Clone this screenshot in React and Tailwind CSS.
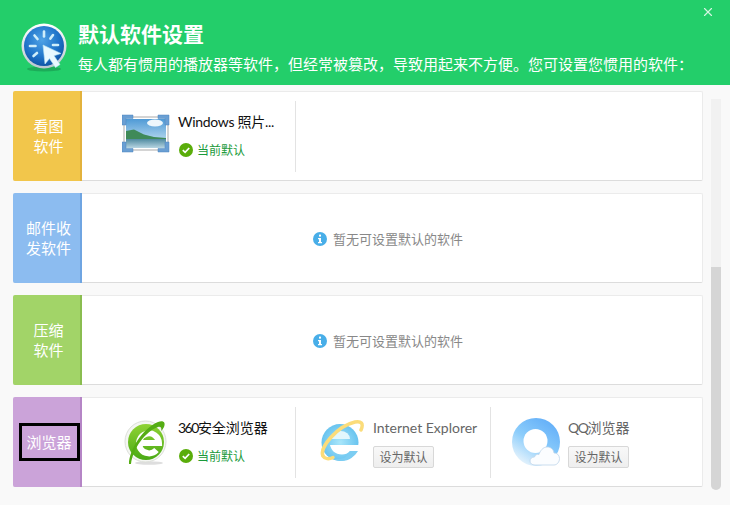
import { X } from "lucide-react";

const FONT = "font-['Noto_Sans_CJK_SC','Noto_Sans',sans-serif]";

const CursorLogo = () => (
  <svg width="48" height="50" viewBox="0 0 48 50" className="shrink-0">
    <defs>
      <radialGradient id="cursorBlue" cx="45%" cy="35%" r="70%">
        <stop offset="0%" stopColor="#4fa3e6" />
        <stop offset="60%" stopColor="#1f74c9" />
        <stop offset="100%" stopColor="#0c4f9f" />
      </radialGradient>
      <linearGradient id="cursorRing" x1="0" y1="0" x2="0" y2="1">
        <stop offset="0%" stopColor="#ffffff" />
        <stop offset="100%" stopColor="#b9c6cf" />
      </linearGradient>
    </defs>
    <ellipse cx="23" cy="46" rx="17" ry="2.5" fill="#17904a" opacity="0.55" />
    <circle cx="23" cy="23" r="22.5" fill="url(#cursorRing)" />
    <circle cx="23" cy="23" r="20" fill="url(#cursorBlue)" />
    <g stroke="#cfeefa" strokeWidth="2.6" strokeLinecap="round">
      <path d="M23 8.5v5" />
      <path d="M32 12l-2.600 3.600" />
      <path d="M37 22h-5" />
      <path d="M13.500 12.500l3 3.500" />
      <path d="M9 23h5.500" />
      <path d="M12.500 33l3.500-3" />
    </g>
    <path
      d="M22 22l2 19 4.500-5.500 6 9 4.500-3-6-8.800 7-2.200z"
      fill="#e8f9ff"
      stroke="#b7e3f2"
      strokeWidth="0.6"
    />
  </svg>
);

const PhotoIcon = () => (
  <svg width="48" height="48" viewBox="0 0 48 48" className="shrink-0">
    <defs>
      <linearGradient id="photoSky" x1="0" y1="0" x2="0" y2="1">
        <stop offset="0%" stopColor="#4f9ad6" />
        <stop offset="100%" stopColor="#d9eef6" />
      </linearGradient>
      <linearGradient id="photoLake" x1="0" y1="0" x2="0" y2="1">
        <stop offset="0%" stopColor="#4f8aa0" />
        <stop offset="100%" stopColor="#b7d5e2" />
      </linearGradient>
    </defs>
    <rect x="2" y="5" width="44" height="33" fill="#fff" stroke="#a9a9a9" />
    <rect x="4" y="7" width="40" height="29" fill="url(#photoSky)" />
    <ellipse cx="33" cy="11" rx="8" ry="3.500" fill="#eef7fc" />
    <path d="M4 19l8-1.500 10 5 10 2.500 12 1v4H4z" fill="#3f8a58" />
    <rect x="4" y="27" width="40" height="9" fill="url(#photoLake)" />
    <g fill="#6a9fd3" stroke="#4c86bf" strokeWidth="0.5">
      <path d="M0 3h11v3.500H4V13H0z" />
      <path d="M47 3H36v3.500h7V13h4z" />
      <path d="M0 40h11v-3.500H4V30H0z" />
      <path d="M47 40H36v-3.500h7V30h4z" />
    </g>
  </svg>
);

const Logo360 = () => (
  <svg width="48" height="48" viewBox="0 0 48 48" className="shrink-0">
    <defs>
      <linearGradient id="green360" x1="0" y1="0" x2="0" y2="1">
        <stop offset="0%" stopColor="#8fd334" />
        <stop offset="100%" stopColor="#4aa916" />
      </linearGradient>
    </defs>
    <ellipse cx="27" cy="45" rx="14" ry="1.800" fill="#dedede" />
    <circle cx="23.500" cy="23.500" r="20.500" fill="#f4f6f2" stroke="#dcdfd9" />
    <circle cx="24" cy="24" r="18" fill="url(#green360)" />
    <path
      d="M17 25H37A10 10 0 1 0 34.500 32"
      fill="none"
      stroke="#fff"
      strokeWidth="6"
    />
    <path
      d="M7 46C7 32 21 10 36 4c5-2 8 0 6 5-1 2-2 3-3 4 1-3 0-5-3-4C24 13 11 30 9 46z"
      fill="#55ad14"
    />
  </svg>
);

const IeLogo = () => (
  <svg width="48" height="48" viewBox="0 0 48 48" className="shrink-0">
    <defs>
      <radialGradient id="ieBlue" cx="50%" cy="50%" r="55%">
        <stop offset="0%" stopColor="#a9e6fa" />
        <stop offset="100%" stopColor="#62c0ee" />
      </radialGradient>
    </defs>
    <circle cx="23" cy="24.500" r="18.500" fill="url(#ieBlue)" />
    <path d="M14 21a9.500 8 0 0 1 19 0z" fill="#e2f7fd" />
    <path
      d="M13 27H48V33H33C31 35.500 28 36.500 25 36.500 18 36.500 14 32 13 27z"
      fill="#fff"
    />
    <path d="M33 33H41C38 38 32 43 25 43c-3 0-6-1-8-2 3 0 7 0 10-1 2-1 4-4 6-7z" fill="#7ccdf2" />
    <path
      d="M6 38C2 30 20 8 38 4 44 3 47 5 44 12"
      fill="none"
      stroke="#fbdc7a"
      strokeWidth="3.500"
      strokeLinecap="round"
    />
    <path d="M6 38c1.500 3 6 3.500 10 1.500" fill="none" stroke="#fbdc7a" strokeWidth="3.500" strokeLinecap="round" />
  </svg>
);

const QqLogo = () => (
  <svg width="48" height="48" viewBox="0 0 48 48" className="shrink-0">
    <defs>
      <linearGradient id="qqBlue" x1="0.9" y1="0.1" x2="0.3" y2="1">
        <stop offset="0%" stopColor="#62aef8" />
        <stop offset="55%" stopColor="#8ccdfb" />
        <stop offset="100%" stopColor="#e6f3fc" />
      </linearGradient>
    </defs>
    <circle cx="24" cy="24" r="24" fill="url(#qqBlue)" />
    <circle cx="23.500" cy="23" r="12" fill="#fff" />
    <path
      d="M23 47c-3 0-5-1.500-5-4s2-4 4.500-4c.5-2 2.500-3 4.500-2.500C28 33 31 29 35 29c4 0 6.500 2.500 7 6 3 0 5.500 2 5.500 5.500S45 47 42 47z"
      fill="#fbfdff"
      stroke="#bed4ea"
      strokeWidth="0.8"
    />
  </svg>
);

const CurrentDefault = () => (
  <div className="flex items-center gap-1 h-[22px] pb-[2px] pl-px">
    <svg width="14" height="14" viewBox="0 0 14 14" className="shrink-0">
      <circle cx="7" cy="7" r="7" fill="#5aad0a" />
      <path
        d="M3.800 7.200l2.300 2.200 4.100-4.400"
        fill="none"
        stroke="#fff"
        strokeWidth="1.700"
      />
    </svg>
    <span className="text-xs text-[#1a9a3a]">当前默认</span>
  </div>
);

const SetDefaultButton = () => (
  <button className="w-[61px] h-[22px] border border-[#d8d8d8] rounded-[2px] bg-gradient-to-b from-[#f8f8f8] to-[#eeeeee] text-xs text-[#666666]">
    设为默认
  </button>
);

const Software = ({ icon, name, current, className, nameClass }) => (
  <div className={`flex items-center h-[71px] ${className}`}>
    {icon}
    <div className="flex flex-col items-start gap-2 ml-2 mt-[2px]">
      <span className={`font-['Lato','Noto_Sans_CJK_SC',sans-serif] text-sm leading-5 whitespace-nowrap ${nameClass}`}>
        {name}
      </span>
      {current ? <CurrentDefault /> : <SetDefaultButton />}
    </div>
  </div>
);

const Empty = () => (
  <div className="flex-1 flex items-center justify-center gap-1.5 pr-2 pt-px">
    <svg width="14" height="14" viewBox="0 0 14 14" className="shrink-0">
      <circle cx="7" cy="7" r="7" fill="#48aee8" />
      <rect x="6" y="2.600" width="2" height="2" fill="#fff" />
      <path d="M5 6h3v4h1v1.300H5V10h1V7.300H5z" fill="#fff" />
    </svg>
    <span className="text-[13px] text-[#888888]">暂无可设置默认的软件</span>
  </div>
);

const Card = ({ lines, color, edge, outlined, children }) => (
  <div className="flex h-[90px] bg-white border border-[#ebebeb] border-b-[#dcdcdc] rounded-[2px]">
    <div
      className={`w-[69px] -ml-px -my-px shrink-0 flex items-center justify-center pl-1 border-r-2 rounded-l-[2px] ${color} ${edge}`}
    >
      <div
        className={`text-[15px] leading-5 text-center text-white ${
          outlined ? "w-[61px] h-[38px] ml-px border-[3px] border-black flex items-center justify-center" : ""
        }`}
      >
        {lines.map((line) => (
          <div key={line}>{line}</div>
        ))}
      </div>
    </div>
    {children}
  </div>
);

const Divider = () => <div className="w-px h-[71px] bg-[#e3e3e3] shrink-0" />;

export default function App() {
  return (
    <div className={`w-[730px] h-[505px] overflow-hidden flex flex-col bg-[#f9f9f9] ${FONT}`}>
      {/* Header */}
      <div className="h-[85px] shrink-0 bg-[#23ce6a] flex pl-[21px] pr-[15px]">
        <div className="mt-[23px]">
          <CursorLogo />
        </div>
        <div className="ml-[9px] flex-1 text-white">
          <h1 className="mt-[19px] text-[21px] leading-7 font-bold">默认软件设置</h1>
          <p className="mt-[5px] text-[15px] leading-6 whitespace-nowrap">
            {"每人都有惯用的播放器等软件\uFF0C但经常被篡改\uFF0C导致用起来不方便。您可设置您惯用的软件\uFF1A"}
          </p>
        </div>
        <X size={14} strokeWidth={2} className="mt-[5px] text-[#d4f5e1]" />
      </div>

      {/* List and scrollbar */}
      <div className="flex flex-1 min-h-0">
        <div className="w-[690px] ml-[13px] mt-[6px] flex flex-col gap-3">
          <Card lines={["看图", "软件"]} color="bg-[#f2c64b]" edge="border-[#e3b23c]">
            <div className="flex items-center">
              <Software
                icon={<PhotoIcon />}
                name="Windows 照片..."
                current
                nameClass="text-[#111111] tracking-[-0.3px]"
                className="w-[213px] pl-[40px]"
              />
              <Divider />
            </div>
          </Card>
          <Card lines={["邮件收", "发软件"]} color="bg-[#8cbcf0]" edge="border-[#6fa5e2]">
            <Empty />
          </Card>
          <Card lines={["压缩", "软件"]} color="bg-[#a2d468]" edge="border-[#8abd50]">
            <Empty />
          </Card>
          <Card lines={["浏览器"]} color="bg-[#cba3d9]" edge="border-[#b585c6]" outlined>
            <div className="flex items-center">
              <Software
                icon={<Logo360 />}
                name={
                  <>
                    <span className="tracking-[-1.500px]">360</span>安全浏览器
                  </>
                }
                current
                nameClass="text-[#111111]"
                className="w-[213px] pl-[40px]"
              />
              <Divider />
              <Software
                icon={<IeLogo />}
                name="Internet Explorer"
                nameClass="text-[#666666]"
                className="w-[194px] pl-[21px]"
              />
              <Divider />
              <Software
                icon={<QqLogo />}
                name={
                  <>
                    <span className="tracking-[-1.500px]">QQ</span>浏览器
                  </>
                }
                nameClass="text-[#666666]"
                className="w-[212px] pl-[21px]"
              />
            </div>
          </Card>
        </div>

        {/* Scrollbar */}
        <div className="w-[10px] ml-2 mt-[14px] mb-[15px] bg-[#f1f1f1] rounded-b-[5px] flex flex-col justify-end">
          <div className="h-[223px] bg-[#d5d5d5] rounded-b-[5px]" />
        </div>
      </div>
    </div>
  );
}
